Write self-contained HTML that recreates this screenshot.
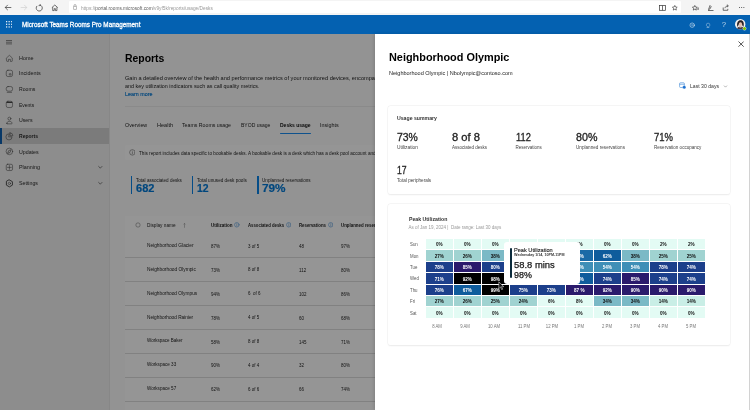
<!DOCTYPE html>
<html lang="en"><head><meta charset="utf-8"><title>Microsoft Teams Rooms Pro Management</title>
<style>
html,body{margin:0;padding:0}
body{width:750px;height:410px;overflow:hidden;position:relative;background:#fff;font-family:"Liberation Sans",sans-serif}
#root{filter:blur(0.35px);will-change:transform;position:absolute;left:0;top:0;width:750px;height:410px;overflow:hidden}
.b{position:absolute;display:block}
.t{position:absolute;white-space:pre}
.clip{position:absolute;left:0;top:0;width:375.400px;height:410px;overflow:hidden}
.ov{position:absolute;left:0;top:33.700px;width:375.400px;height:376.300px;background:rgba(0,0,0,.41)}
.card{background:#fff;border-radius:2.500px;box-shadow:0 0 0 .5px #f0f0f0,0 .5px 1.400px rgba(0,0,0,.09)}
</style></head><body><div id="root">
<div class="clip">
<div class="b" style="left:0.00px;top:34.00px;width:109.00px;height:376.00px;background:#f0f0f0;"></div>
<div class="b" style="left:109.00px;top:34.00px;width:266.00px;height:376.00px;background:#fafafa;"></div><div class="b" style="left:108.80px;top:34.00px;width:0.50px;height:376.00px;background:#e6e6e6;"></div>
<div class="b" style="left:0.00px;top:128.00px;width:109.00px;height:15.60px;background:#d2d2d2;"></div>
<div class="b" style="left:0.00px;top:128.00px;width:1.60px;height:15.60px;background:#0f5fb0;"></div>
<div class="b" style="left:6.4px;top:40.0px;width:6.1px;height:0.55px;background:#8a8a8a;box-shadow:0 1.7px 0 #8a8a8a,0 3.4px 0 #8a8a8a"></div>
<svg class="b" style="left:5.00px;top:53.60px" width="8.8" height="8.8" viewBox="0 0 16 16" fill="none" stroke="#484848" stroke-width="1.00" stroke-linecap="round" stroke-linejoin="round"><path d="M2.800 7.200 8 2.400l5.200 4.800v5.300a1 1 0 0 1-1 1h-2.400v-3.700H6.200v3.700H3.800a1 1 0 0 1-1-1z"/></svg><svg class="b" style="left:5.00px;top:69.20px" width="8.8" height="8.8" viewBox="0 0 16 16" fill="none" stroke="#484848" stroke-width="1.00" stroke-linecap="round" stroke-linejoin="round"><rect x="2.300" y="2.300" width="11.400" height="11.400" rx="3"/><path d="M8.500 8.500h2.500v2.500h-2.500z" stroke-width=".9"/></svg><svg class="b" style="left:5.00px;top:84.80px" width="8.8" height="8.8" viewBox="0 0 16 16" fill="none" stroke="#484848" stroke-width="1.00" stroke-linecap="round" stroke-linejoin="round"><rect x="2.300" y="2.800" width="11.400" height="8.400" rx="3.200"/><path d="M4 13.400h8"/></svg><svg class="b" style="left:5.00px;top:100.40px" width="8.8" height="8.8" viewBox="0 0 16 16" fill="none" stroke="#484848" stroke-width="1.00" stroke-linecap="round" stroke-linejoin="round"><rect x="2.300" y="2.300" width="11.400" height="11.400" rx="3"/><path d="M3.500 4.300h9" stroke-width="2.200"/></svg><svg class="b" style="left:5.00px;top:116.00px" width="8.8" height="8.8" viewBox="0 0 16 16" fill="none" stroke="#484848" stroke-width="1.00" stroke-linecap="round" stroke-linejoin="round"><circle cx="8" cy="4.800" r="2.700"/><path d="M3.300 13.600c0-2.600 1.700-3.800 4.700-3.800s4.700 1.200 4.700 3.800c0 .5-.4.700-.9.700H4.200c-.5 0-.9-.2-.9-.7z"/></svg><svg class="b" style="left:5.00px;top:131.80px" width="8.8" height="8.8" viewBox="0 0 16 16" fill="none" stroke="#484848" stroke-width="1.00" stroke-linecap="round" stroke-linejoin="round"><path d="M7.200 3.200A5.600 5.600 0 1 0 12.800 8.800H7.200z"/><path d="M9.200 1.600v5.200h5.200A5.200 5.200 0 0 0 9.200 1.600z"/></svg><svg class="b" style="left:5.00px;top:147.40px" width="8.8" height="8.8" viewBox="0 0 16 16" fill="none" stroke="#484848" stroke-width="1.00" stroke-linecap="round" stroke-linejoin="round"><circle cx="8" cy="8" r="6"/><path d="M5 11l1.600-4.400L11 5 9.400 9.400z" stroke-width="1.100"/></svg><svg class="b" style="left:5.00px;top:163.20px" width="8.8" height="8.8" viewBox="0 0 16 16" fill="none" stroke="#484848" stroke-width="1.00" stroke-linecap="round" stroke-linejoin="round"><rect x="2.300" y="2.300" width="11.400" height="11.400" rx="2.600"/><path d="M8 4.500v7M4.500 8h7" stroke-width="1"/></svg><svg class="b" style="left:5.00px;top:178.80px" width="8.8" height="8.8" viewBox="0 0 16 16" fill="none" stroke="#484848" stroke-width="1.00" stroke-linecap="round" stroke-linejoin="round"><circle cx="8" cy="8" r="2.100"/><path d="M8 1.700l5.450 3.150v6.300L8 14.300 2.550 11.150v-6.300z" stroke-width="1.700"/></svg><svg class="b" style="left:96.50px;top:164.10px" width="6.6" height="6.6" viewBox="0 0 16 16" fill="none" stroke="#333" stroke-width="1.45" stroke-linecap="round" stroke-linejoin="round"><path d="M4 6l4 4 4-4"/></svg><svg class="b" style="left:96.50px;top:179.70px" width="6.6" height="6.6" viewBox="0 0 16 16" fill="none" stroke="#333" stroke-width="1.45" stroke-linecap="round" stroke-linejoin="round"><path d="M4 6l4 4 4-4"/></svg>
<div class="b" style="left:125.00px;top:106.30px;width:250.00px;height:0.70px;background:#ebebeb;"></div>
<div class="b" style="left:279.60px;top:132.50px;width:31.00px;height:1.50px;background:#1a8cf0;border-radius:.5px"></div>
<div class="b" style="left:125.00px;top:145.00px;width:250.00px;height:15.00px;background:#fdfdfd;border-radius:2px"></div>
<svg class="b" style="left:128.60px;top:148.90px" width="6.8" height="6.8" viewBox="0 0 16 16" fill="none" stroke="#555" stroke-width="1.18" stroke-linecap="round" stroke-linejoin="round"><circle cx="8" cy="8" r="6.500"/><path d="M8 7.500v4M8 4.800v.2"/></svg>
<div class="b" style="left:130.90px;top:176.00px;width:1.60px;height:18.00px;background:#0a84e8;"></div><div class="b" style="left:191.90px;top:176.00px;width:1.60px;height:18.00px;background:#0a84e8;"></div><div class="b" style="left:257.10px;top:176.00px;width:1.60px;height:18.00px;background:#0a84e8;"></div>
<div class="b" style="left:125.00px;top:216.20px;width:250.00px;height:194.00px;background:#fdfdfd;"></div>
<svg class="b" style="left:134.500px;top:222.300px" width="6" height="6" viewBox="0 0 6 6" fill="none" stroke="#5e5e5e" stroke-width=".45"><circle cx="3" cy="3" r="2.150"/></svg>
<svg class="b" style="left:183.3px;top:222.8px" width="3" height="5" viewBox="0 0 3 5" fill="none" stroke="#777" stroke-width=".45"><path d="M1.500 4.800V.4M.5 1.400l1-1 1 1"/></svg>
<svg class="b" style="left:234.40px;top:222.40px" width="5.6" height="5.6" viewBox="0 0 16 16" fill="none" stroke="#2a7fd0" stroke-width="1.29" stroke-linecap="round" stroke-linejoin="round"><circle cx="8" cy="8" r="6.500"/><path d="M8 7.500v4M8 4.800v.2"/></svg><svg class="b" style="left:285.60px;top:222.40px" width="5.6" height="5.6" viewBox="0 0 16 16" fill="none" stroke="#2a7fd0" stroke-width="1.29" stroke-linecap="round" stroke-linejoin="round"><circle cx="8" cy="8" r="6.500"/><path d="M8 7.500v4M8 4.800v.2"/></svg><svg class="b" style="left:327.60px;top:222.40px" width="5.6" height="5.6" viewBox="0 0 16 16" fill="none" stroke="#2a7fd0" stroke-width="1.29" stroke-linecap="round" stroke-linejoin="round"><circle cx="8" cy="8" r="6.500"/><path d="M8 7.500v4M8 4.800v.2"/></svg>
<div class="b" style="left:125.00px;top:257.40px;width:250.00px;height:0.60px;background:#dcdcdc;"></div><div class="b" style="left:125.00px;top:281.25px;width:250.00px;height:0.60px;background:#dcdcdc;"></div><div class="b" style="left:125.00px;top:305.10px;width:250.00px;height:0.60px;background:#dcdcdc;"></div><div class="b" style="left:125.00px;top:328.95px;width:250.00px;height:0.60px;background:#dcdcdc;"></div><div class="b" style="left:125.00px;top:352.80px;width:250.00px;height:0.60px;background:#dcdcdc;"></div><div class="b" style="left:125.00px;top:376.65px;width:250.00px;height:0.60px;background:#dcdcdc;"></div><div class="b" style="left:125.00px;top:400.50px;width:250.00px;height:0.60px;background:#dcdcdc;"></div>
<div class="t" style="left:18.80px;top:55px;font-size:6.0px;line-height:7.20px;color:#2a2a2a;transform-origin:0 50%;transform:scaleX(0.8991);">Home</div><div class="t" style="left:18.80px;top:70px;font-size:6.0px;line-height:7.20px;color:#2a2a2a;transform-origin:0 50%;transform:scaleX(0.8994);">Incidents</div><div class="t" style="left:18.80px;top:86px;font-size:6.0px;line-height:7.20px;color:#2a2a2a;transform-origin:0 50%;transform:scaleX(0.8519);">Rooms</div><div class="t" style="left:18.80px;top:102px;font-size:6.0px;line-height:7.20px;color:#2a2a2a;transform-origin:0 50%;transform:scaleX(0.8286);">Events</div><div class="t" style="left:18.80px;top:117px;font-size:6.0px;line-height:7.20px;color:#2a2a2a;transform-origin:0 50%;transform:scaleX(0.8678);">Users</div><div class="t" style="left:18.80px;top:133px;font-size:6.0px;line-height:7.20px;color:#2a2a2a;font-weight:700;transform-origin:0 50%;transform:scaleX(0.8380);">Reports</div><div class="t" style="left:18.80px;top:149px;font-size:6.0px;line-height:7.20px;color:#2a2a2a;transform-origin:0 50%;transform:scaleX(0.8766);">Updates</div><div class="t" style="left:18.80px;top:164px;font-size:6.0px;line-height:7.20px;color:#2a2a2a;transform-origin:0 50%;transform:scaleX(0.8990);">Planning</div><div class="t" style="left:18.80px;top:180px;font-size:6.0px;line-height:7.20px;color:#2a2a2a;transform-origin:0 50%;transform:scaleX(0.8761);">Settings</div><div class="t" style="left:125.00px;top:52px;font-size:11.4px;line-height:13.68px;color:#000;font-weight:700;transform-origin:0 50%;transform:scaleX(0.9153);">Reports</div><div class="t" style="left:125.00px;top:75px;font-size:5.4px;line-height:6.48px;color:#242424;transform-origin:0 50%;transform:scaleX(1.0427);">Gain a detailed overview of the health and performance metrics of your monitored devices, encompassing room status</div><div class="t" style="left:125.00px;top:83px;font-size:5.4px;line-height:6.48px;color:#242424;">and key utilization indicators such as call quality metrics.</div><div class="t" style="left:125.00px;top:91px;font-size:5.4px;line-height:6.48px;color:#0078d4;-webkit-text-stroke:0.15px #0078d4;transform-origin:0 50%;transform:scaleX(0.9935);">Learn more</div><div class="t" style="left:124.60px;top:122px;font-size:5.6px;line-height:6.72px;color:#242424;transform-origin:0 50%;transform:scaleX(0.9523);">Overview</div><div class="t" style="left:156.60px;top:122px;font-size:5.6px;line-height:6.72px;color:#242424;transform-origin:0 50%;transform:scaleX(0.9894);">Health</div><div class="t" style="left:182.00px;top:122px;font-size:5.6px;line-height:6.72px;color:#242424;transform-origin:0 50%;transform:scaleX(0.9325);">Teams Rooms usage</div><div class="t" style="left:240.60px;top:122px;font-size:5.6px;line-height:6.72px;color:#242424;transform-origin:0 50%;transform:scaleX(0.9003);">BYOD usage</div><div class="t" style="left:279.80px;top:122px;font-size:5.6px;line-height:6.72px;color:#111;font-weight:700;transform-origin:0 50%;transform:scaleX(0.8942);">Desks usage</div><div class="t" style="left:320.00px;top:122px;font-size:5.6px;line-height:6.72px;color:#242424;transform-origin:0 50%;transform:scaleX(0.9647);">Insights</div><div class="t" style="left:138.60px;top:151px;font-size:4.8px;line-height:5.76px;color:#242424;transform-origin:0 50%;transform:scaleX(0.9710);">This report includes data specific to bookable desks. A bookable desk is a desk which has a desk pool account and a device</div><div class="t" style="left:135.60px;top:178px;font-size:4.8px;line-height:5.76px;color:#242424;transform-origin:0 50%;transform:scaleX(0.9489);">Total associated desks</div><div class="t" style="left:135.60px;top:183px;font-size:10.3px;line-height:12.36px;color:#0078d4;font-weight:700;-webkit-text-stroke:0.2px #0078d4;transform-origin:0 50%;transform:scaleX(1.0705);">682</div><div class="t" style="left:196.60px;top:178px;font-size:4.8px;line-height:5.76px;color:#242424;transform-origin:0 50%;transform:scaleX(0.9676);">Total unused desk pools</div><div class="t" style="left:196.60px;top:183px;font-size:10.3px;line-height:12.36px;color:#0078d4;font-weight:700;-webkit-text-stroke:0.2px #0078d4;transform-origin:0 50%;transform:scaleX(1.0114);">12</div><div class="t" style="left:262.00px;top:178px;font-size:4.8px;line-height:5.76px;color:#242424;transform-origin:0 50%;transform:scaleX(0.9591);">Unplanned reservations</div><div class="t" style="left:262.00px;top:183px;font-size:10.3px;line-height:12.36px;color:#0078d4;font-weight:700;-webkit-text-stroke:0.2px #0078d4;transform-origin:0 50%;transform:scaleX(1.1451);">79%</div><div class="t" style="left:147.00px;top:223px;font-size:4.7px;line-height:5.64px;color:#242424;transform-origin:0 50%;transform:scaleX(1.0068);">Display name</div><div class="t" style="left:211.00px;top:223px;font-size:4.7px;line-height:5.64px;color:#242424;font-weight:700;transform-origin:0 50%;transform:scaleX(0.9640);">Utilization</div><div class="t" style="left:247.60px;top:223px;font-size:4.7px;line-height:5.64px;color:#242424;font-weight:700;transform-origin:0 50%;transform:scaleX(0.9089);">Associated desks</div><div class="t" style="left:298.60px;top:223px;font-size:4.7px;line-height:5.64px;color:#242424;font-weight:700;transform-origin:0 50%;transform:scaleX(0.9167);">Reservations</div><div class="t" style="left:340.60px;top:223px;font-size:4.7px;line-height:5.64px;color:#242424;font-weight:700;transform-origin:0 50%;transform:scaleX(0.9362);">Unplanned reservations</div><div class="t" style="left:147.30px;top:242px;font-size:5.0px;line-height:6.00px;color:#242424;transform-origin:0 50%;transform:scaleX(0.9560);">Neighborhood Glacier</div><div class="t" style="left:211.00px;top:244px;font-size:4.6px;line-height:5.52px;color:#242424;transform-origin:0 50%;transform:scaleX(0.9750);">87%</div><div class="t" style="left:247.60px;top:244px;font-size:4.6px;line-height:5.52px;color:#242424;transform-origin:0 50%;transform:scaleX(0.9750);">3 of 5</div><div class="t" style="left:298.60px;top:244px;font-size:4.6px;line-height:5.52px;color:#242424;transform-origin:0 50%;transform:scaleX(0.9750);">48</div><div class="t" style="left:340.60px;top:244px;font-size:4.6px;line-height:5.52px;color:#242424;transform-origin:0 50%;transform:scaleX(0.9750);">97%</div><div class="t" style="left:147.30px;top:266px;font-size:5.0px;line-height:6.00px;color:#242424;transform-origin:0 50%;transform:scaleX(0.9595);">Neighborhood Olympic</div><div class="t" style="left:211.00px;top:268px;font-size:4.6px;line-height:5.52px;color:#242424;transform-origin:0 50%;transform:scaleX(0.9750);">73%</div><div class="t" style="left:247.60px;top:267px;font-size:4.6px;line-height:5.52px;color:#242424;transform-origin:0 50%;transform:scaleX(0.9750);">8 of 8</div><div class="t" style="left:298.60px;top:268px;font-size:4.6px;line-height:5.52px;color:#242424;transform-origin:0 50%;transform:scaleX(0.9750);">112</div><div class="t" style="left:340.60px;top:268px;font-size:4.6px;line-height:5.52px;color:#242424;transform-origin:0 50%;transform:scaleX(0.9750);">80%</div><div class="t" style="left:147.30px;top:290px;font-size:5.0px;line-height:6.00px;color:#242424;transform-origin:0 50%;transform:scaleX(0.9556);">Neighborhood Olympus</div><div class="t" style="left:211.00px;top:292px;font-size:4.6px;line-height:5.52px;color:#242424;transform-origin:0 50%;transform:scaleX(0.9750);">94%</div><div class="t" style="left:247.60px;top:291px;font-size:4.6px;line-height:5.52px;color:#242424;transform-origin:0 50%;transform:scaleX(0.9750);">6  of 6</div><div class="t" style="left:298.60px;top:292px;font-size:4.6px;line-height:5.52px;color:#242424;transform-origin:0 50%;transform:scaleX(0.9750);">102</div><div class="t" style="left:340.60px;top:292px;font-size:4.6px;line-height:5.52px;color:#242424;transform-origin:0 50%;transform:scaleX(0.9750);">86%</div><div class="t" style="left:147.30px;top:314px;font-size:5.0px;line-height:6.00px;color:#242424;transform-origin:0 50%;transform:scaleX(0.9495);">Neighborhood Rainier</div><div class="t" style="left:211.00px;top:316px;font-size:4.6px;line-height:5.52px;color:#242424;transform-origin:0 50%;transform:scaleX(0.9750);">78%</div><div class="t" style="left:247.60px;top:315px;font-size:4.6px;line-height:5.52px;color:#242424;transform-origin:0 50%;transform:scaleX(0.9750);">4 of 5</div><div class="t" style="left:298.60px;top:316px;font-size:4.6px;line-height:5.52px;color:#242424;transform-origin:0 50%;transform:scaleX(0.9750);">60</div><div class="t" style="left:340.60px;top:316px;font-size:4.6px;line-height:5.52px;color:#242424;transform-origin:0 50%;transform:scaleX(0.9750);">68%</div><div class="t" style="left:147.30px;top:337px;font-size:5.0px;line-height:6.00px;color:#242424;transform-origin:0 50%;transform:scaleX(0.9041);">Workspace Baker</div><div class="t" style="left:211.00px;top:340px;font-size:4.6px;line-height:5.52px;color:#242424;transform-origin:0 50%;transform:scaleX(0.9750);">58%</div><div class="t" style="left:247.60px;top:339px;font-size:4.6px;line-height:5.52px;color:#242424;transform-origin:0 50%;transform:scaleX(0.9750);">8 of 8</div><div class="t" style="left:298.60px;top:340px;font-size:4.6px;line-height:5.52px;color:#242424;transform-origin:0 50%;transform:scaleX(0.9750);">145</div><div class="t" style="left:340.60px;top:340px;font-size:4.6px;line-height:5.52px;color:#242424;transform-origin:0 50%;transform:scaleX(0.9750);">71%</div><div class="t" style="left:147.30px;top:361px;font-size:5.0px;line-height:6.00px;color:#242424;transform-origin:0 50%;transform:scaleX(0.9161);">Workspace 33</div><div class="t" style="left:211.00px;top:363px;font-size:4.6px;line-height:5.52px;color:#242424;transform-origin:0 50%;transform:scaleX(0.9750);">90%</div><div class="t" style="left:247.60px;top:363px;font-size:4.6px;line-height:5.52px;color:#242424;transform-origin:0 50%;transform:scaleX(0.9750);">4 of 4</div><div class="t" style="left:298.60px;top:363px;font-size:4.6px;line-height:5.52px;color:#242424;transform-origin:0 50%;transform:scaleX(0.9750);">32</div><div class="t" style="left:340.60px;top:363px;font-size:4.6px;line-height:5.52px;color:#242424;transform-origin:0 50%;transform:scaleX(0.9750);">80%</div><div class="t" style="left:147.30px;top:385px;font-size:5.0px;line-height:6.00px;color:#242424;transform-origin:0 50%;transform:scaleX(0.9161);">Workspace 57</div><div class="t" style="left:211.00px;top:387px;font-size:4.6px;line-height:5.52px;color:#242424;transform-origin:0 50%;transform:scaleX(0.9750);">62%</div><div class="t" style="left:247.60px;top:387px;font-size:4.6px;line-height:5.52px;color:#242424;transform-origin:0 50%;transform:scaleX(0.9750);">6 of 6</div><div class="t" style="left:298.60px;top:387px;font-size:4.6px;line-height:5.52px;color:#242424;transform-origin:0 50%;transform:scaleX(0.9750);">66</div><div class="t" style="left:340.60px;top:387px;font-size:4.6px;line-height:5.52px;color:#242424;transform-origin:0 50%;transform:scaleX(0.9750);">74%</div></div>
<div class="ov"></div>

<div class="b" style="left:0.00px;top:0.00px;width:750.00px;height:15.20px;background:#f4f4f4;"></div>
<div class="b" style="left:68.80px;top:1.40px;width:612.60px;height:12.10px;background:#ffffff;border-radius:1px"></div>
<svg class="b" style="left:3.600px;top:4.200px" width="8" height="7" viewBox="0 0 8 7" fill="none" stroke="#333" stroke-width=".7"><path d="M7.300 3.500H1.200M3.800 .9 1.200 3.500l2.600 2.600"/></svg>
<svg class="b" style="left:19.600px;top:4.200px" width="8" height="7" viewBox="0 0 8 7" fill="none" stroke="#d0d0d0" stroke-width=".7"><path d="M.7 3.500h6.100M4.200 .9l2.600 2.600-2.600 2.600"/></svg>
<svg class="b" style="left:35.100px;top:3.700px" width="8" height="8" viewBox="0 0 9 9" fill="none" stroke="#333" stroke-width=".8"><path d="M5.500 1.200A3.400 3.400 0 1 1 2.300 2.200"/><path d="M5.800 0v1.800H4" stroke-width=".7"/></svg>
<svg class="b" style="left:50.900px;top:4.100px" width="7.600" height="7.600" viewBox="0 0 9 9" fill="none" stroke="#333" stroke-width=".8"><path d="M1 4.300 4.500 1.200 8 4.300M2 3.800V7.800H3.800V5.500H5.200V7.800H7V3.800"/></svg>
<svg class="b" style="left:72.800px;top:4.100px" width="4" height="6" viewBox="0 0 4 6" fill="none" stroke="#777" stroke-width=".5"><rect x=".4" y="2.400" width="3.200" height="3" rx=".4"/><path d="M1 2.400V1.500a1 1 0 0 1 2 0v.9"/></svg>
<svg class="b" style="left:658.600px;top:4.600px" width="7" height="6" viewBox="0 0 7 6" fill="none" stroke="#333" stroke-width=".7"><rect x=".5" y=".5" width="6" height="4.800"/><path d="M3.500.5v4.800"/></svg>
<svg class="b" style="left:672.1px;top:5.300px" width="5.600" height="5.600" viewBox="0 0 10 10" fill="none" stroke="#2a2a2a" stroke-width="1.100" stroke-linejoin="round"><path d="M5 .8 6.300 3.600 9.300 4 7.100 6.100 7.700 9.100 5 7.600 2.300 9.100 2.900 6.100 .7 4 3.700 3.600Z"/></svg>
<svg class="b" style="left:692.2px;top:5.200px" width="7.300" height="5.600" viewBox="0 0 13 10" fill="none" stroke="#2a2a2a" stroke-width="1.100" stroke-linejoin="round"><path d="M5 .8 6.300 3.600 9.300 4 7.100 6.100 7.700 9.100 5 7.600 2.300 9.100 2.900 6.100 .7 4 3.700 3.600Z"/><path d="M9.500 5.500h3M9.200 7.500h3.300"/></svg>
<svg class="b" style="left:707.200px;top:4.200px" width="7" height="7" viewBox="0 0 7 7" fill="none" stroke="#333" stroke-width=".7"><path d="M1.500 5.500 3 1.500l1.200 1.200-1.500 2.500zM1 6.500h5.500"/></svg>
<svg class="b" style="left:722.400px;top:4.200px" width="8" height="7" viewBox="0 0 8 7" fill="none" stroke="#333" stroke-width=".7"><path d="M1.200 3.500v2.800h4.600V4.800M3 4.200c.2-1.600 1.400-2.300 3-2.300M4.900.6 6.400 1.900 4.900 3.200"/></svg>
<div class="b" style="left:739.300px;top:7.000px;width:1px;height:1px;background:#333;border-radius:50%;box-shadow:2.200px 0 0 #333,4.400px 0 0 #333"></div>
<div class="t" style="left:81.100px;top:6px;font-size:4.700px;line-height:5.600px;color:#999;transform-origin:0 50%;transform:scaleX(1.0158)">https://<span style="color:#5a5a5a">portal.rooms.microsoft.com</span>/v9yf5k/reports/usage/Desks</div>
<div class="b" style="left:0.00px;top:15.10px;width:750.00px;height:18.60px;background:#0461b1;"></div>
<svg class="b" style="left:6.200px;top:21.300px" width="6.3" height="6.6" viewBox="0 0 6.2 6.2" preserveAspectRatio="none" fill="#fff" opacity=".9"><rect x="0.0" y="0.0" width="1.200" height="1.200"/><rect x="0.0" y="2.5" width="1.200" height="1.200"/><rect x="0.0" y="5.0" width="1.200" height="1.200"/><rect x="2.5" y="0.0" width="1.200" height="1.200"/><rect x="2.5" y="2.5" width="1.200" height="1.200"/><rect x="2.5" y="5.0" width="1.200" height="1.200"/><rect x="5.0" y="0.0" width="1.200" height="1.200"/><rect x="5.0" y="2.5" width="1.200" height="1.200"/><rect x="5.0" y="5.0" width="1.200" height="1.200"/></svg>
<svg class="b" style="left:689.20px;top:21.70px" width="6.4" height="6.4" viewBox="0 0 16 16" fill="none" stroke="rgba(255,255,255,.5)" stroke-width="1.25" stroke-linecap="round" stroke-linejoin="round"><circle cx="8" cy="8" r="2.200"/><circle cx="8" cy="8" r="5.600" stroke-width="2.400"/></svg>
<svg class="b" style="left:704.50px;top:21.80px" width="6.2" height="6.2" viewBox="0 0 16 16" fill="none" stroke="rgba(255,255,255,.6)" stroke-width="1.42" stroke-linecap="round" stroke-linejoin="round"><path d="M5.500 11.500C4 10.500 3.500 9 3.500 7.500a4.500 4.500 0 0 1 9 0c0 1.500-.5 3-2 4v2h-5zM6 15h4"/></svg>
<div class="t" style="left:721.700px;top:20.200px;font-size:7.800px;line-height:9.400px;color:rgba(255,255,255,.72)">?</div>
<svg class="b" style="left:735.400px;top:19.400px" width="10.600" height="10.600" viewBox="0 0 20 20"><defs><clipPath id="avc"><circle cx="10" cy="10" r="10"/></clipPath></defs><g clip-path="url(#avc)"><rect width="20" height="20" fill="#f3f1f0"/><path d="M4.500 15C2.500 7 6 2.500 10.500 2.500 15.500 2.500 18 7 16 15L13 11H7z" fill="#2a2226"/><ellipse cx="10.300" cy="9.800" rx="3.100" ry="3.800" fill="#e6c0ab"/><path d="M3.500 20c0-4.500 3-5.500 7-5.500s6.500 1 6.500 5.500z" fill="#4a3d45"/><path d="M8.300 13.500h4v2.500h-4z" fill="#e6c0ab"/></g></svg>
<div class="b" style="left:742.900px;top:26.900px;width:3.400px;height:3.400px;border-radius:50%;background:#7bc000;box-shadow:0 0 0 .4px rgba(255,255,255,.8)"></div>
<div class="t" style="left:22.00px;top:21px;font-size:6.7px;line-height:8.04px;color:#ffffff;-webkit-text-stroke:0.28px #ffffff;transform-origin:0 50%;transform:scaleX(0.9490);">Microsoft Teams Rooms Pro Management</div>

<div class="b" style="left:375.400px;top:33.700px;width:374.600px;height:376.300px;background:#fff;box-shadow:-1px 0 3px rgba(0,0,0,.14)"></div>
<div class="b" style="left:748.70px;top:33.70px;width:0.80px;height:377.00px;background:#d2d2d2;"></div>
<svg class="b" style="left:737.700px;top:40.600px" width="6.200" height="6.200" viewBox="0 0 6 6" fill="none" stroke="#1a1a1a" stroke-width=".72"><path d="M.5.500l5 5M5.500.5l-5 5"/></svg>
<svg class="b" style="left:679.400px;top:82.400px" width="7" height="7" viewBox="0 0 14 14" fill="none" stroke="#4a90d9" stroke-width="1.300"><rect x="1.200" y="1.500" width="9.500" height="9.500" rx="1.800"/><path d="M1.200 4.500h9.500" /><circle cx="10.400" cy="10.400" r="3.500" fill="#1a6fd0" stroke="#fff" stroke-width=".8"/></svg>
<svg class="b" style="left:722.50px;top:83.50px" width="5" height="5" viewBox="0 0 16 16" fill="none" stroke="#6a6a6a" stroke-width="1.60" stroke-linecap="round" stroke-linejoin="round"><path d="M4 6l4 4 4-4"/></svg>
<div class="b card" style="left:388.400px;top:105.600px;width:341.800px;height:88px"></div>
<div class="b card" style="left:388.400px;top:203.600px;width:341.800px;height:141.800px"></div>
<div class="b" style="left:425.60px;top:238.90px;width:27.30px;height:10.40px;background:#e3fbf4;"></div><div class="b" style="left:453.60px;top:238.90px;width:27.30px;height:10.40px;background:#e3fbf4;"></div><div class="b" style="left:481.60px;top:238.90px;width:27.30px;height:10.40px;background:#e3fbf4;"></div><div class="b" style="left:509.60px;top:238.90px;width:27.30px;height:10.40px;background:#e3fbf4;"></div><div class="b" style="left:537.60px;top:238.90px;width:27.30px;height:10.40px;background:#e3fbf4;"></div><div class="b" style="left:565.60px;top:238.90px;width:27.30px;height:10.40px;background:#e3fbf4;"></div><div class="b" style="left:593.60px;top:238.90px;width:27.30px;height:10.40px;background:#e3fbf4;"></div><div class="b" style="left:621.60px;top:238.90px;width:27.30px;height:10.40px;background:#e3fbf4;"></div><div class="b" style="left:649.60px;top:238.90px;width:27.30px;height:10.40px;background:#e3fbf4;"></div><div class="b" style="left:677.60px;top:238.90px;width:27.30px;height:10.40px;background:#e3fbf4;"></div><div class="b" style="left:425.60px;top:250.33px;width:27.30px;height:10.40px;background:#a0d3d1;"></div><div class="b" style="left:453.60px;top:250.33px;width:27.30px;height:10.40px;background:#a0d3d1;"></div><div class="b" style="left:481.60px;top:250.33px;width:27.30px;height:10.40px;background:#7bb9c6;"></div><div class="b" style="left:509.60px;top:250.33px;width:27.30px;height:10.40px;background:#3f8fb7;"></div><div class="b" style="left:537.60px;top:250.33px;width:27.30px;height:10.40px;background:#3f8fb7;"></div><div class="b" style="left:565.60px;top:250.33px;width:27.30px;height:10.40px;background:#1a6aa6;"></div><div class="b" style="left:593.60px;top:250.33px;width:27.30px;height:10.40px;background:#0f5c9c;"></div><div class="b" style="left:621.60px;top:250.33px;width:27.30px;height:10.40px;background:#7bb9c6;"></div><div class="b" style="left:649.60px;top:250.33px;width:27.30px;height:10.40px;background:#a0d3d1;"></div><div class="b" style="left:677.60px;top:250.33px;width:27.30px;height:10.40px;background:#a0d3d1;"></div><div class="b" style="left:425.60px;top:261.76px;width:27.30px;height:10.40px;background:#1c3f8b;"></div><div class="b" style="left:453.60px;top:261.76px;width:27.30px;height:10.40px;background:#2a1a6c;"></div><div class="b" style="left:481.60px;top:261.76px;width:27.30px;height:10.40px;background:#1c3f8b;"></div><div class="b" style="left:509.60px;top:261.76px;width:27.30px;height:10.40px;background:#1c3f8b;"></div><div class="b" style="left:537.60px;top:261.76px;width:27.30px;height:10.40px;background:#0f5c9c;"></div><div class="b" style="left:565.60px;top:261.76px;width:27.30px;height:10.40px;background:#3f8fb7;"></div><div class="b" style="left:593.60px;top:261.76px;width:27.30px;height:10.40px;background:#3f8fb7;"></div><div class="b" style="left:621.60px;top:261.76px;width:27.30px;height:10.40px;background:#3f8fb7;"></div><div class="b" style="left:649.60px;top:261.76px;width:27.30px;height:10.40px;background:#1c3f8b;"></div><div class="b" style="left:677.60px;top:261.76px;width:27.30px;height:10.40px;background:#1c3f8b;"></div><div class="b" style="left:425.60px;top:273.19px;width:27.30px;height:10.40px;background:#1c3f8b;"></div><div class="b" style="left:453.60px;top:273.19px;width:27.30px;height:10.40px;background:#000000;"></div><div class="b" style="left:481.60px;top:273.19px;width:27.30px;height:10.40px;background:#000000;"></div><div class="b" style="left:509.60px;top:273.19px;width:27.30px;height:10.40px;background:#2a1a6c;"></div><div class="b" style="left:537.60px;top:273.19px;width:27.30px;height:10.40px;background:#1c3f8b;"></div><div class="b" style="left:565.60px;top:273.19px;width:27.30px;height:10.40px;background:#0f5c9c;"></div><div class="b" style="left:593.60px;top:273.19px;width:27.30px;height:10.40px;background:#1c3f8b;"></div><div class="b" style="left:621.60px;top:273.19px;width:27.30px;height:10.40px;background:#2a1a6c;"></div><div class="b" style="left:649.60px;top:273.19px;width:27.30px;height:10.40px;background:#1c3f8b;"></div><div class="b" style="left:677.60px;top:273.19px;width:27.30px;height:10.40px;background:#1c3f8b;"></div><div class="b" style="left:425.60px;top:284.62px;width:27.30px;height:10.40px;background:#1c3f8b;"></div><div class="b" style="left:453.60px;top:284.62px;width:27.30px;height:10.40px;background:#0f5c9c;"></div><div class="b" style="left:481.60px;top:284.62px;width:27.30px;height:10.40px;background:#000000;"></div><div class="b" style="left:509.60px;top:284.62px;width:27.30px;height:10.40px;background:#1c3f8b;"></div><div class="b" style="left:537.60px;top:284.62px;width:27.30px;height:10.40px;background:#1c3f8b;"></div><div class="b" style="left:565.60px;top:284.62px;width:27.30px;height:10.40px;background:#2a1a6c;"></div><div class="b" style="left:593.60px;top:284.62px;width:27.30px;height:10.40px;background:#2a1a6c;"></div><div class="b" style="left:621.60px;top:284.62px;width:27.30px;height:10.40px;background:#2a1a6c;"></div><div class="b" style="left:649.60px;top:284.62px;width:27.30px;height:10.40px;background:#2a1a6c;"></div><div class="b" style="left:677.60px;top:284.62px;width:27.30px;height:10.40px;background:#2a1a6c;"></div><div class="b" style="left:425.60px;top:296.05px;width:27.30px;height:10.40px;background:#a0d3d1;"></div><div class="b" style="left:453.60px;top:296.05px;width:27.30px;height:10.40px;background:#a0d3d1;"></div><div class="b" style="left:481.60px;top:296.05px;width:27.30px;height:10.40px;background:#a0d3d1;"></div><div class="b" style="left:509.60px;top:296.05px;width:27.30px;height:10.40px;background:#a0d3d1;"></div><div class="b" style="left:537.60px;top:296.05px;width:27.30px;height:10.40px;background:#e3fbf4;"></div><div class="b" style="left:565.60px;top:296.05px;width:27.30px;height:10.40px;background:#e3fbf4;"></div><div class="b" style="left:593.60px;top:296.05px;width:27.30px;height:10.40px;background:#7bb9c6;"></div><div class="b" style="left:621.60px;top:296.05px;width:27.30px;height:10.40px;background:#7bb9c6;"></div><div class="b" style="left:649.60px;top:296.05px;width:27.30px;height:10.40px;background:#c9eee6;"></div><div class="b" style="left:677.60px;top:296.05px;width:27.30px;height:10.40px;background:#c9eee6;"></div><div class="b" style="left:425.60px;top:307.48px;width:27.30px;height:10.40px;background:#e3fbf4;"></div><div class="b" style="left:453.60px;top:307.48px;width:27.30px;height:10.40px;background:#e3fbf4;"></div><div class="b" style="left:481.60px;top:307.48px;width:27.30px;height:10.40px;background:#e3fbf4;"></div><div class="b" style="left:509.60px;top:307.48px;width:27.30px;height:10.40px;background:#e3fbf4;"></div><div class="b" style="left:537.60px;top:307.48px;width:27.30px;height:10.40px;background:#e3fbf4;"></div><div class="b" style="left:565.60px;top:307.48px;width:27.30px;height:10.40px;background:#e3fbf4;"></div><div class="b" style="left:593.60px;top:307.48px;width:27.30px;height:10.40px;background:#e3fbf4;"></div><div class="b" style="left:621.60px;top:307.48px;width:27.30px;height:10.40px;background:#e3fbf4;"></div><div class="b" style="left:649.60px;top:307.48px;width:27.30px;height:10.40px;background:#e3fbf4;"></div><div class="b" style="left:677.60px;top:307.48px;width:27.30px;height:10.40px;background:#e3fbf4;"></div>
<div class="t" style="left:389.00px;top:51px;font-size:11.0px;line-height:13.20px;color:#000;font-weight:700;transform-origin:0 50%;transform:scaleX(0.9899);">Neighborhood Olympic</div><div class="t" style="left:389.00px;top:70px;font-size:5.6px;line-height:6.72px;color:#222;transform-origin:0 50%;transform:scaleX(0.9890);">Neighborhood Olympic | Nbolympic@contoso.com</div><div class="t" style="left:690.00px;top:83px;font-size:5.2px;line-height:6.24px;color:#333;transform-origin:0 50%;transform:scaleX(0.9857);">Last 30 days</div><div class="t" style="left:396.80px;top:115px;font-size:5.3px;line-height:6.36px;color:#333;font-weight:700;transform-origin:0 50%;transform:scaleX(0.9771);">Usage summary</div><div class="t" style="left:396.80px;top:132px;font-size:10.2px;line-height:12.24px;color:#242424;-webkit-text-stroke:0.3px #242424;transform-origin:0 50%;transform:scaleX(1.0201);">73%</div><div class="t" style="left:396.80px;top:145px;font-size:4.5px;line-height:5.40px;color:#444;transform-origin:0 50%;transform:scaleX(1.0761);">Utilization</div><div class="t" style="left:452.00px;top:132px;font-size:10.2px;line-height:12.24px;color:#242424;-webkit-text-stroke:0.3px #242424;transform-origin:0 50%;transform:scaleX(1.0980);">8 of 8</div><div class="t" style="left:452.00px;top:145px;font-size:4.5px;line-height:5.40px;color:#444;">Associated desks</div><div class="t" style="left:515.60px;top:132px;font-size:10.2px;line-height:12.24px;color:#242424;-webkit-text-stroke:0.3px #242424;transform-origin:0 50%;transform:scaleX(0.9108);">112</div><div class="t" style="left:515.60px;top:145px;font-size:4.5px;line-height:5.40px;color:#444;">Reservations</div><div class="t" style="left:575.60px;top:132px;font-size:10.2px;line-height:12.24px;color:#242424;-webkit-text-stroke:0.3px #242424;transform-origin:0 50%;transform:scaleX(1.0495);">80%</div><div class="t" style="left:575.60px;top:145px;font-size:4.5px;line-height:5.40px;color:#444;transform-origin:0 50%;transform:scaleX(1.0309);">Unplanned reservations</div><div class="t" style="left:653.60px;top:132px;font-size:10.2px;line-height:12.24px;color:#242424;-webkit-text-stroke:0.3px #242424;transform-origin:0 50%;transform:scaleX(0.9318);">71%</div><div class="t" style="left:653.60px;top:145px;font-size:4.5px;line-height:5.40px;color:#444;transform-origin:0 50%;transform:scaleX(1.0132);">Reservation occupancy</div><div class="t" style="left:396.80px;top:165px;font-size:10.2px;line-height:12.24px;color:#242424;-webkit-text-stroke:0.3px #242424;transform-origin:0 50%;transform:scaleX(0.8463);">17</div><div class="t" style="left:396.80px;top:178px;font-size:4.5px;line-height:5.40px;color:#444;transform-origin:0 50%;transform:scaleX(1.0354);">Total peripherals</div><div class="t" style="left:408.60px;top:216px;font-size:5.4px;line-height:6.48px;color:#333;font-weight:700;transform-origin:0 50%;transform:scaleX(0.9638);">Peak Utilization</div><div class="t" style="left:408.60px;top:225px;font-size:4.5px;line-height:5.40px;color:#999;">As of Jan 19, 2024 |  Date range: Last 30 days</div><div class="t" style="left:410.20px;top:242px;font-size:4.7px;line-height:5.64px;color:#555;transform-origin:0 50%;transform:scaleX(0.9300);">Sun</div><div class="t" style="left:410.20px;top:254px;font-size:4.7px;line-height:5.64px;color:#555;transform-origin:0 50%;transform:scaleX(0.9300);">Mon</div><div class="t" style="left:410.20px;top:265px;font-size:4.7px;line-height:5.64px;color:#555;transform-origin:0 50%;transform:scaleX(0.9300);">Tue</div><div class="t" style="left:410.20px;top:276px;font-size:4.7px;line-height:5.64px;color:#555;transform-origin:0 50%;transform:scaleX(0.9300);">Wed</div><div class="t" style="left:410.20px;top:288px;font-size:4.7px;line-height:5.64px;color:#555;transform-origin:0 50%;transform:scaleX(0.9300);">Thu</div><div class="t" style="left:410.20px;top:299px;font-size:4.7px;line-height:5.64px;color:#555;transform-origin:0 50%;transform:scaleX(0.9300);">Fri</div><div class="t" style="left:410.20px;top:311px;font-size:4.7px;line-height:5.64px;color:#555;transform-origin:0 50%;transform:scaleX(0.9300);">Sat</div><div class="t" style="left:439.25px;top:242px;font-size:4.6px;line-height:5.52px;color:#111;font-weight:700;transform-origin:50% 50%;transform:translateX(-50%);">0%</div><div class="t" style="left:467.25px;top:242px;font-size:4.6px;line-height:5.52px;color:#111;font-weight:700;transform-origin:50% 50%;transform:translateX(-50%);">0%</div><div class="t" style="left:495.25px;top:242px;font-size:4.6px;line-height:5.52px;color:#111;font-weight:700;transform-origin:50% 50%;transform:translateX(-50%);">0%</div><div class="t" style="left:579.25px;top:242px;font-size:4.6px;line-height:5.52px;color:#111;font-weight:700;transform-origin:50% 50%;transform:translateX(-50%);">0%</div><div class="t" style="left:607.25px;top:242px;font-size:4.6px;line-height:5.52px;color:#111;font-weight:700;transform-origin:50% 50%;transform:translateX(-50%);">0%</div><div class="t" style="left:635.25px;top:242px;font-size:4.6px;line-height:5.52px;color:#111;font-weight:700;transform-origin:50% 50%;transform:translateX(-50%);">0%</div><div class="t" style="left:663.25px;top:242px;font-size:4.6px;line-height:5.52px;color:#111;font-weight:700;transform-origin:50% 50%;transform:translateX(-50%);">2%</div><div class="t" style="left:691.25px;top:242px;font-size:4.6px;line-height:5.52px;color:#111;font-weight:700;transform-origin:50% 50%;transform:translateX(-50%);">2%</div><div class="t" style="left:439.25px;top:254px;font-size:4.6px;line-height:5.52px;color:#111;font-weight:700;transform-origin:50% 50%;transform:translateX(-50%);">27%</div><div class="t" style="left:467.25px;top:254px;font-size:4.6px;line-height:5.52px;color:#111;font-weight:700;transform-origin:50% 50%;transform:translateX(-50%);">26%</div><div class="t" style="left:495.25px;top:254px;font-size:4.6px;line-height:5.52px;color:#111;font-weight:700;transform-origin:50% 50%;transform:translateX(-50%);">38%</div><div class="t" style="left:579.25px;top:254px;font-size:4.6px;line-height:5.52px;color:#fff;font-weight:700;transform-origin:50% 50%;transform:translateX(-50%);">60%</div><div class="t" style="left:607.25px;top:254px;font-size:4.6px;line-height:5.52px;color:#fff;font-weight:700;transform-origin:50% 50%;transform:translateX(-50%);">62%</div><div class="t" style="left:635.25px;top:254px;font-size:4.6px;line-height:5.52px;color:#111;font-weight:700;transform-origin:50% 50%;transform:translateX(-50%);">38%</div><div class="t" style="left:663.25px;top:254px;font-size:4.6px;line-height:5.52px;color:#111;font-weight:700;transform-origin:50% 50%;transform:translateX(-50%);">25%</div><div class="t" style="left:691.25px;top:254px;font-size:4.6px;line-height:5.52px;color:#111;font-weight:700;transform-origin:50% 50%;transform:translateX(-50%);">25%</div><div class="t" style="left:439.25px;top:265px;font-size:4.6px;line-height:5.52px;color:#fff;font-weight:700;transform-origin:50% 50%;transform:translateX(-50%);">78%</div><div class="t" style="left:467.25px;top:265px;font-size:4.6px;line-height:5.52px;color:#fff;font-weight:700;transform-origin:50% 50%;transform:translateX(-50%);">85%</div><div class="t" style="left:495.25px;top:265px;font-size:4.6px;line-height:5.52px;color:#fff;font-weight:700;transform-origin:50% 50%;transform:translateX(-50%);">80%</div><div class="t" style="left:579.25px;top:265px;font-size:4.6px;line-height:5.52px;color:#fff;font-weight:700;transform-origin:50% 50%;transform:translateX(-50%);">52%</div><div class="t" style="left:607.25px;top:265px;font-size:4.6px;line-height:5.52px;color:#fff;font-weight:700;transform-origin:50% 50%;transform:translateX(-50%);">54%</div><div class="t" style="left:635.25px;top:265px;font-size:4.6px;line-height:5.52px;color:#fff;font-weight:700;transform-origin:50% 50%;transform:translateX(-50%);">54%</div><div class="t" style="left:663.25px;top:265px;font-size:4.6px;line-height:5.52px;color:#fff;font-weight:700;transform-origin:50% 50%;transform:translateX(-50%);">78%</div><div class="t" style="left:691.25px;top:265px;font-size:4.6px;line-height:5.52px;color:#fff;font-weight:700;transform-origin:50% 50%;transform:translateX(-50%);">74%</div><div class="t" style="left:439.25px;top:277px;font-size:4.6px;line-height:5.52px;color:#fff;font-weight:700;transform-origin:50% 50%;transform:translateX(-50%);">71%</div><div class="t" style="left:467.25px;top:277px;font-size:4.6px;line-height:5.52px;color:#fff;font-weight:700;transform-origin:50% 50%;transform:translateX(-50%);">92%</div><div class="t" style="left:495.25px;top:277px;font-size:4.6px;line-height:5.52px;color:#fff;font-weight:700;transform-origin:50% 50%;transform:translateX(-50%);">98%</div><div class="t" style="left:579.25px;top:277px;font-size:4.6px;line-height:5.52px;color:#fff;font-weight:700;transform-origin:50% 50%;transform:translateX(-50%);">64%</div><div class="t" style="left:607.25px;top:277px;font-size:4.6px;line-height:5.52px;color:#fff;font-weight:700;transform-origin:50% 50%;transform:translateX(-50%);">74%</div><div class="t" style="left:635.25px;top:277px;font-size:4.6px;line-height:5.52px;color:#fff;font-weight:700;transform-origin:50% 50%;transform:translateX(-50%);">85%</div><div class="t" style="left:663.25px;top:277px;font-size:4.6px;line-height:5.52px;color:#fff;font-weight:700;transform-origin:50% 50%;transform:translateX(-50%);">74%</div><div class="t" style="left:691.25px;top:277px;font-size:4.6px;line-height:5.52px;color:#fff;font-weight:700;transform-origin:50% 50%;transform:translateX(-50%);">74%</div><div class="t" style="left:439.25px;top:288px;font-size:4.6px;line-height:5.52px;color:#fff;font-weight:700;transform-origin:50% 50%;transform:translateX(-50%);">76%</div><div class="t" style="left:467.25px;top:288px;font-size:4.6px;line-height:5.52px;color:#fff;font-weight:700;transform-origin:50% 50%;transform:translateX(-50%);">67%</div><div class="t" style="left:495.25px;top:288px;font-size:4.6px;line-height:5.52px;color:#fff;font-weight:700;transform-origin:50% 50%;transform:translateX(-50%);">99%</div><div class="t" style="left:523.25px;top:288px;font-size:4.6px;line-height:5.52px;color:#fff;font-weight:700;transform-origin:50% 50%;transform:translateX(-50%);">75%</div><div class="t" style="left:551.25px;top:288px;font-size:4.6px;line-height:5.52px;color:#fff;font-weight:700;transform-origin:50% 50%;transform:translateX(-50%);">73%</div><div class="t" style="left:579.25px;top:288px;font-size:4.6px;line-height:5.52px;color:#fff;font-weight:700;transform-origin:50% 50%;transform:translateX(-50%);">87 %</div><div class="t" style="left:607.25px;top:288px;font-size:4.6px;line-height:5.52px;color:#fff;font-weight:700;transform-origin:50% 50%;transform:translateX(-50%);">92%</div><div class="t" style="left:635.25px;top:288px;font-size:4.6px;line-height:5.52px;color:#fff;font-weight:700;transform-origin:50% 50%;transform:translateX(-50%);">90%</div><div class="t" style="left:663.25px;top:288px;font-size:4.6px;line-height:5.52px;color:#fff;font-weight:700;transform-origin:50% 50%;transform:translateX(-50%);">90%</div><div class="t" style="left:691.25px;top:288px;font-size:4.6px;line-height:5.52px;color:#fff;font-weight:700;transform-origin:50% 50%;transform:translateX(-50%);">90%</div><div class="t" style="left:439.25px;top:299px;font-size:4.6px;line-height:5.52px;color:#111;font-weight:700;transform-origin:50% 50%;transform:translateX(-50%);">27%</div><div class="t" style="left:467.25px;top:299px;font-size:4.6px;line-height:5.52px;color:#111;font-weight:700;transform-origin:50% 50%;transform:translateX(-50%);">26%</div><div class="t" style="left:495.25px;top:299px;font-size:4.6px;line-height:5.52px;color:#111;font-weight:700;transform-origin:50% 50%;transform:translateX(-50%);">25%</div><div class="t" style="left:523.25px;top:299px;font-size:4.6px;line-height:5.52px;color:#111;font-weight:700;transform-origin:50% 50%;transform:translateX(-50%);">24%</div><div class="t" style="left:551.25px;top:299px;font-size:4.6px;line-height:5.52px;color:#111;font-weight:700;transform-origin:50% 50%;transform:translateX(-50%);">6%</div><div class="t" style="left:579.25px;top:299px;font-size:4.6px;line-height:5.52px;color:#111;font-weight:700;transform-origin:50% 50%;transform:translateX(-50%);">8%</div><div class="t" style="left:607.25px;top:299px;font-size:4.6px;line-height:5.52px;color:#111;font-weight:700;transform-origin:50% 50%;transform:translateX(-50%);">34%</div><div class="t" style="left:635.25px;top:299px;font-size:4.6px;line-height:5.52px;color:#111;font-weight:700;transform-origin:50% 50%;transform:translateX(-50%);">34%</div><div class="t" style="left:663.25px;top:299px;font-size:4.6px;line-height:5.52px;color:#111;font-weight:700;transform-origin:50% 50%;transform:translateX(-50%);">14%</div><div class="t" style="left:691.25px;top:299px;font-size:4.6px;line-height:5.52px;color:#111;font-weight:700;transform-origin:50% 50%;transform:translateX(-50%);">14%</div><div class="t" style="left:439.25px;top:311px;font-size:4.6px;line-height:5.52px;color:#111;font-weight:700;transform-origin:50% 50%;transform:translateX(-50%);">0%</div><div class="t" style="left:467.25px;top:311px;font-size:4.6px;line-height:5.52px;color:#111;font-weight:700;transform-origin:50% 50%;transform:translateX(-50%);">0%</div><div class="t" style="left:495.25px;top:311px;font-size:4.6px;line-height:5.52px;color:#111;font-weight:700;transform-origin:50% 50%;transform:translateX(-50%);">0%</div><div class="t" style="left:523.25px;top:311px;font-size:4.6px;line-height:5.52px;color:#111;font-weight:700;transform-origin:50% 50%;transform:translateX(-50%);">0%</div><div class="t" style="left:551.25px;top:311px;font-size:4.6px;line-height:5.52px;color:#111;font-weight:700;transform-origin:50% 50%;transform:translateX(-50%);">0%</div><div class="t" style="left:579.25px;top:311px;font-size:4.6px;line-height:5.52px;color:#111;font-weight:700;transform-origin:50% 50%;transform:translateX(-50%);">0%</div><div class="t" style="left:607.25px;top:311px;font-size:4.6px;line-height:5.52px;color:#111;font-weight:700;transform-origin:50% 50%;transform:translateX(-50%);">0%</div><div class="t" style="left:635.25px;top:311px;font-size:4.6px;line-height:5.52px;color:#111;font-weight:700;transform-origin:50% 50%;transform:translateX(-50%);">0%</div><div class="t" style="left:663.25px;top:311px;font-size:4.6px;line-height:5.52px;color:#111;font-weight:700;transform-origin:50% 50%;transform:translateX(-50%);">0%</div><div class="t" style="left:691.25px;top:311px;font-size:4.6px;line-height:5.52px;color:#111;font-weight:700;transform-origin:50% 50%;transform:translateX(-50%);">0%</div><div class="t" style="left:436.80px;top:324px;font-size:4.6px;line-height:5.52px;color:#777;transform-origin:50% 50%;transform:translateX(-50%) scaleX(0.9300);">8 AM</div><div class="t" style="left:464.70px;top:324px;font-size:4.6px;line-height:5.52px;color:#777;transform-origin:50% 50%;transform:translateX(-50%) scaleX(0.9300);">9 AM</div><div class="t" style="left:494.00px;top:324px;font-size:4.6px;line-height:5.52px;color:#777;transform-origin:50% 50%;transform:translateX(-50%) scaleX(0.9300);">10 AM</div><div class="t" style="left:523.70px;top:324px;font-size:4.6px;line-height:5.52px;color:#777;transform-origin:50% 50%;transform:translateX(-50%) scaleX(0.9300);">11 PM</div><div class="t" style="left:551.60px;top:324px;font-size:4.6px;line-height:5.52px;color:#777;transform-origin:50% 50%;transform:translateX(-50%) scaleX(0.9300);">12 PM</div><div class="t" style="left:579.20px;top:324px;font-size:4.6px;line-height:5.52px;color:#777;transform-origin:50% 50%;transform:translateX(-50%) scaleX(0.9300);">1 PM</div><div class="t" style="left:606.90px;top:324px;font-size:4.6px;line-height:5.52px;color:#777;transform-origin:50% 50%;transform:translateX(-50%) scaleX(0.9300);">2 PM</div><div class="t" style="left:635.00px;top:324px;font-size:4.6px;line-height:5.52px;color:#777;transform-origin:50% 50%;transform:translateX(-50%) scaleX(0.9300);">3 PM</div><div class="t" style="left:663.00px;top:324px;font-size:4.6px;line-height:5.52px;color:#777;transform-origin:50% 50%;transform:translateX(-50%) scaleX(0.9300);">4 PM</div><div class="t" style="left:690.70px;top:324px;font-size:4.6px;line-height:5.52px;color:#777;transform-origin:50% 50%;transform:translateX(-50%) scaleX(0.9300);">5 PM</div>

<div class="b" style="left:504.200px;top:241.700px;width:75.700px;height:42.300px;background:#fff;border-radius:3.200px"></div>
<div class="b" style="left:509.50px;top:247.80px;width:2.10px;height:29.80px;background:#0b2b3c;border-radius:1px"></div>
<div class="t" style="left:514.10px;top:247px;font-size:5.4px;line-height:6.48px;color:#222;-webkit-text-stroke:0.12px #222;transform-origin:0 50%;transform:scaleX(1.0415);">Peak Utilization</div><div class="t" style="left:514.10px;top:253px;font-size:3.4px;line-height:4.08px;color:#333;font-weight:700;transform-origin:0 50%;transform:scaleX(1.0773);">Wednesday 1/14, 10PM-11PM</div><div class="t" style="left:514.10px;top:260px;font-size:9.0px;line-height:10.80px;color:#1a1a1a;-webkit-text-stroke:0.25px #1a1a1a;transform-origin:0 50%;transform:scaleX(1.0453);">58.8 mins</div><div class="t" style="left:514.10px;top:270px;font-size:8.6px;line-height:10.32px;color:#1a1a1a;-webkit-text-stroke:0.25px #1a1a1a;transform-origin:0 50%;transform:scaleX(1.0405);">98%</div><svg class="b" style="left:498.300px;top:281.300px" width="6.600" height="9.200" viewBox="0 0 6.600 9.200"><path d="M.8.800v6.800l1.700-1.500 1.200 2.600 1-.5-1.200-2.500h2.300z" fill="#111" stroke="#e8e8e8" stroke-width=".55" stroke-linejoin="round"/></svg>
</div></body></html>
